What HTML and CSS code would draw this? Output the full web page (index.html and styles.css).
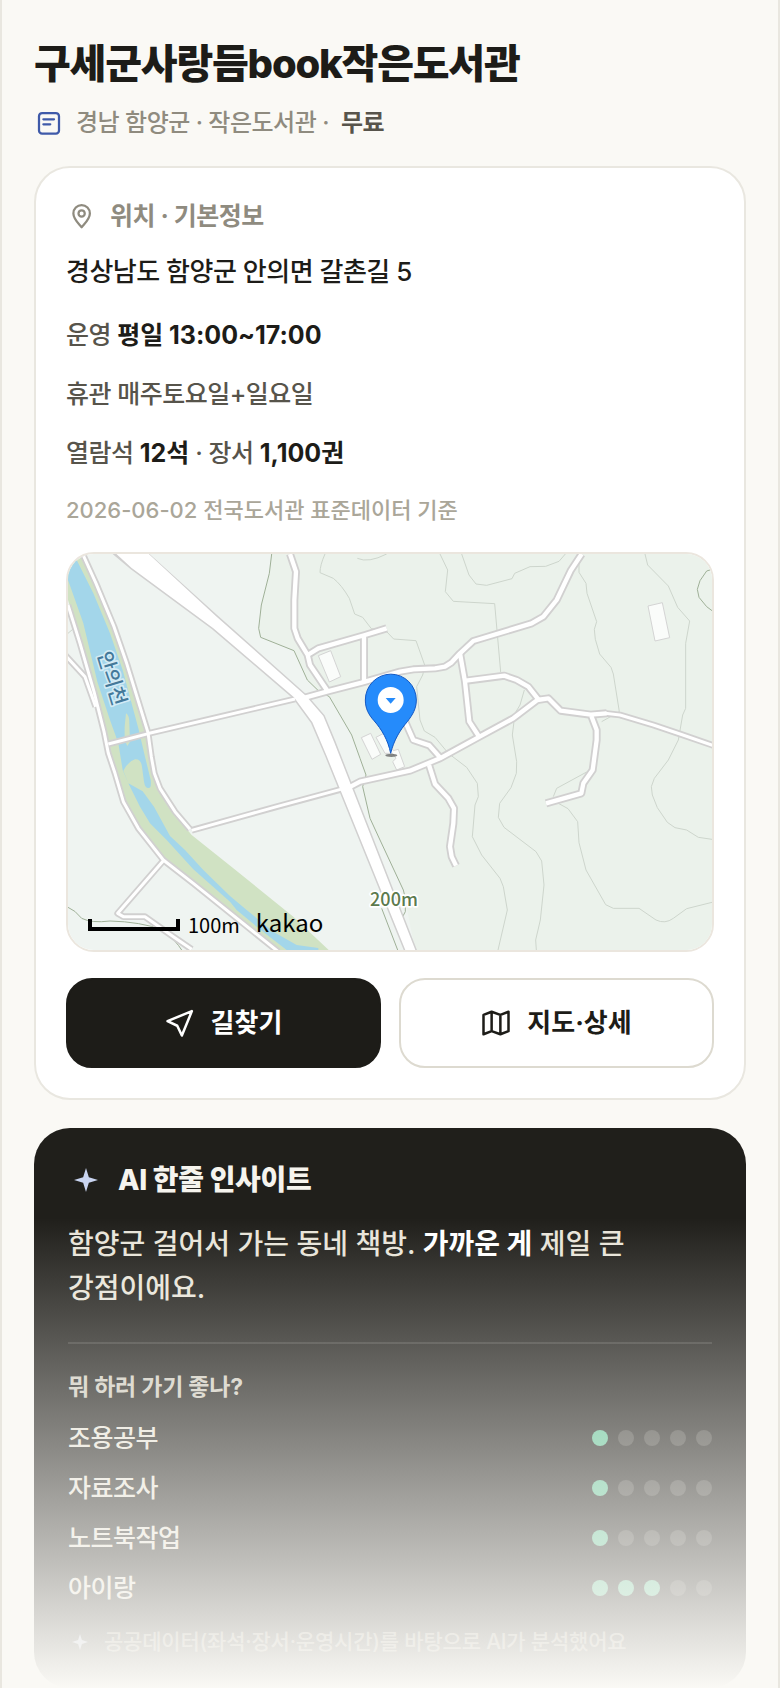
FILE: index.html
```html
<!DOCTYPE html>
<html lang="ko">
<head>
    <meta charset="UTF-8">
    <meta name="viewport" content="width=device-width, initial-scale=1.0">
    <title>구세군사랑듬book작은도서관</title>
    <link rel="stylesheet" href="styles.css">
</head>
<body>
    <main class="sheet">
        <header class="head">
            <h1>구세군사랑듬book작은도서관</h1>
            <p class="meta">
                <svg class="icon icon-type" viewBox="0 0 24 24" aria-hidden="true">
                    <rect x="4" y="4" width="16" height="16.500" rx="2.500"/>
                    <path d="M7.500 9h8.500M7.500 13h5.500"/>
                </svg>
                <span>경남 함양군 · 작은도서관 ·</span>
                <b>무료</b>
            </p>
        </header>

        <section class="card">
            <h2 class="card-title">
                <svg class="icon" viewBox="0 0 24 24" aria-hidden="true">
                    <path d="M12.500 21C9.700 17.600 5.900 14.200 5.900 9.900a6.600 6.600 0 0 1 13.200 0c0 4.300-3.800 7.700-6.600 11.100z"/>
                    <circle cx="12.500" cy="9.900" r="2.500"/>
                </svg>
                위치 · 기본정보
            </h2>
            <p class="address">경상남도 함양군 안의면 갈촌길 5</p>
            <p class="row">운영 <b>평일 13:00~17:00</b></p>
            <p class="row">휴관 매주토요일+일요일</p>
            <p class="row">열람석 <b>12석</b> · 장서 <b>1,100권</b></p>
            <p class="source">2026-06-02 전국도서관 표준데이터 기준</p>

            <div class="map">
                <svg class="map-tiles" viewBox="24 42 1932 1188" preserveAspectRatio="xMidYMid slice" role="img" aria-label="지도">
                    <!-- land -->
                    <rect class="land" x="24" y="42" width="1932" height="1188"/>
                    <path class="hill" d="M635 42L628 100 604 195 596 265 602 292 702 332 742 420 775 452 808 470 875 585 900 655 918 705 908 740 930 835 960 900 1030 1050 1065 1230H1956V42Z"/>

                    <!-- river -->
                    <path class="bank" d="M24 42H58L100 130 155 250 195 360 250 560 272 650 290 740 325 800 395 885 520 985 700 1130 806 1230H640L400 1030 310 955 235 865 190 785 165 700 140 600 100 440 60 300 24 180Z"/>
                    <path class="water" d="M24 42L50 60 100 160 150 280 188 390 235 565 255 650 272 720Q275 745 265 744 255 744 252 725L246 680Q243 656 225 658 205 664 190 692L205 730 248 754 282 800 330 888 375 930 430 990 510 1068 560 1110 640 1175 710 1215 775 1224V1230H680L590 1160 530 1110 510 1085 400 988 320 900 270 850 240 800 205 730 188 690 175 610 150 540 112 425 70 250 24 120Z"/>
                    <path class="bank" d="M198 520Q208 525 208 550L210 605 202 618 194 600Q192 560 198 520Z"/>

                    <!-- contour lines -->
                    <g class="contour">
                        <path d="M795 42Q780 75 780 98L820 115Q845 135 868 175L884 222 908 232 934 266 980 275 1001 297 1068 302 1095 378 1088 405 1070 440 1080 540 1093 573 1125 592 1165 640 1220 682 1252 730 1255 770 1245 795 1237 890 1265 945 1320 1015 1330 1040 1342 1110 1314 1230"/>
                        <path d="M892 55Q925 70 980 42"/>
                        <path d="M1140 42L1163 90 1156 155 1180 184 1304 191 1322 396"/>
                        <path d="M1205 42L1227 105 1248 132 1280 136 1356 116 1364 100 1410 80 1457 79 1497 64 1516 42"/>
                        <path d="M1393 450L1380 495 1365 520 1357 585 1370 665 1369 700 1353 743 1319 790 1315 832 1332 862 1428 935 1445 963 1452 1035 1441 1140 1427 1200 1429 1230"/>
                        <path d="M1557 42V97L1578 130 1581 160 1610 245 1603 268 1606 298 1619 342 1653 382 1660 402 1678 515 1625 545"/>
                        <path d="M1755 42L1763 75 1825 138 1853 202 1889 243 1877 310V505L1868 525 1855 600 1825 660 1783 715 1774 740 1777 765 1792 803 1822 847 1845 863 1880 870 1915 892 1956 898"/>
                        <path d="M1580 696L1490 745 1480 770M1495 790L1524 806 1553 845 1557 908 1578 990 1637 1094 1660 1105H1737L1788 1140Q1815 1153 1840 1135L1880 1106 1956 1087"/>
                        <path d="M24 280L45 262 30 215"/>
                    </g>
                    <g class="boundary">
                        <path d="M635 42L628 100 604 195 596 265 602 292 702 332 742 420 775 452 808 470 875 585 900 655 918 705 908 740 930 835 960 900 1030 1050 1036 1075V1115L1028 1130"/>
                        <path d="M965 1105L1013 1230M24 1102Q45 1110 65 1135 95 1150 150 1143 240 1145 310 1170 350 1205 365 1230"/>
                        <path d="M1956 88L1940 93 1920 122 1912 148 1917 172 1940 200 1956 212"/>
                    </g>

                    <!-- buildings -->
                    <g class="building">
                        <path d="M775 347L812 332 842 410 808 426Z"/>
                        <path d="M904 593L932 580 962 643 936 658Z"/>
                        <path d="M948 592L975 578 1000 632 1015 628 1034 680 1010 690 998 665 1008 655 998 640 975 640Z"/>
                        <path d="M1764 198L1807 188 1829 293 1785 303Z"/>
                    </g>

                    <!-- roads: grey casing first, white surface on top -->
                    <defs>
                        <g id="lanes">
                            <path d="M24 195L60 310 102 455 132 575 145 640 165 700 190 785 235 865 310 960 400 1030 655 1235"/>
                            <path d="M15 345L75 410 107 500"/>
                            <path d="M68 42L108 130 162 260 200 370 264 578 274 650 283 700 300 745 345 815 390 868"/>
                            <path d="M310 962L173 1120 190 1130H255L340 1190 395 1228"/>
                            <path d="M145 612L268 580 705 477"/>
                            <path d="M395 871L650 800 850 746"/>
                        </g>
                        <g id="streets">
                            <path d="M735 473L800 455 905 428 1020 395 1060 388 1125 385 1155 380 1175 367 1200 340 1240 303 1415 250 1450 230 1490 180 1532 92 1565 42"/>
                            <path d="M690 42L708 95 703 180V265L713 295 743 345 750 375 802 452"/>
                            <path d="M743 345L775 325 915 285 980 265M912 287V425"/>
                            <path d="M1200 340L1215 425 1228 545 1256 588"/>
                            <path d="M1218 422L1333 407 1370 420 1405 440 1435 478"/>
                            <path d="M862 745L900 725 1050 692 1140 655 1255 592 1360 535 1432 480 1465 475 1502 512 1592 524 1640 520"/>
                            <path d="M1020 500L1040 555 1060 600 1108 616 1140 652"/>
                            <path d="M1107 675L1125 732 1165 775 1182 805 1180 850 1170 920 1175 950 1188 977"/>
                            <path d="M1594 528L1610 570V600L1598 690 1570 730 1564 760 1458 790"/>
                        </g>
                        <path id="lane-east" d="M1635 520L1680 525 1780 555 1860 582 1970 620"/>
                    </defs>
                    <use class="lane-case" href="#lanes"/>
                    <use class="lane-case" href="#lane-east"/>
                    <use class="street-case" href="#streets"/>
                    <path class="highway-case" d="M165 42L215 84 460 265 702 472 757 547 800 648 1038 1235H1068L822 605 790 528 738 468 470 230 262 42Z"/>
                    <use class="lane" href="#lanes"/>
                    <use class="lane" href="#lane-east"/>
                    <use class="street" href="#streets"/>
                    <path class="highway" d="M165 38L215 84 460 265 702 472 757 547 800 648 1038 1235H1068L822 605 790 528 738 468 470 230 262 38Z"/>

                    <text class="river-name" x="0" y="0" transform="translate(136 421) rotate(73)">안의천</text>
                    <text class="contour-label" x="1002" y="1098">200m</text>

                    <!-- pin -->
                    <ellipse class="pin-shadow" cx="994" cy="646" rx="18" ry="5"/>
                    <path class="pin" d="M992 640C984 600 965 568 942 542 926 524 916 506 916 480A76 77 0 0 1 1069 480C1069 506 1058 524 1042 545 1020 570 1001 602 992 640Z"/>
                    <circle class="pin-hole" cx="992" cy="480" r="39"/>
                    <path class="pin-mark" d="M977 474H1007L992 491Z"/>
                </svg>
                <div class="map-legend">
                    <span class="scale-bar"></span>
                    <span class="scale-text">100m</span>
                    <span class="map-brand">kakao</span>
                </div>
            </div>

            <div class="actions">
                <button class="btn btn-dark" type="button">
                    <svg class="icon" viewBox="0 0 24 24" aria-hidden="true">
                        <path d="M21.500 2.500L2 10.500 9.800 14.200 13.500 22Z"/>
                    </svg>
                    길찾기
                </button>
                <button class="btn btn-line" type="button">
                    <svg class="icon" viewBox="0 0 24 24" aria-hidden="true">
                        <path d="M2 5.500L8.500 3 15.500 5.500 22 3V18.500L15.500 21 8.500 18.500 2 21ZM8.500 3V18.500M15.500 5.500V21"/>
                    </svg>
                    지도·상세
                </button>
            </div>
        </section>

        <section class="insight">
            <h2 class="insight-title">
                <svg class="star" viewBox="0 0 24 24" aria-hidden="true">
                    <path d="M12 4L13.900 10.100 20 12 13.900 13.900 12 20 10.100 13.900 4 12 10.100 10.100Z"/>
                </svg>
                AI 한줄 인사이트
            </h2>
            <p class="summary">함양군 걸어서 가는 동네 책방. <b>가까운 게</b> 제일 큰 강점이에요.</p>
            <div class="fit">
                <h3>뭐 하러 가기 좋나?</h3>
                <ul>
                    <li>조용공부 <span class="dots"><i class="on"></i><i></i><i></i><i></i><i></i></span></li>
                    <li>자료조사 <span class="dots"><i class="on"></i><i></i><i></i><i></i><i></i></span></li>
                    <li>노트북작업 <span class="dots"><i class="on"></i><i></i><i></i><i></i><i></i></span></li>
                    <li>아이랑 <span class="dots"><i class="on"></i><i class="on"></i><i class="on"></i><i></i><i></i></span></li>
                </ul>
            </div>
            <p class="note">
                <svg class="star" viewBox="0 0 24 24" aria-hidden="true">
                    <path d="M12 4L13.900 10.100 20 12 13.900 13.900 12 20 10.100 13.900 4 12 10.100 10.100Z"/>
                </svg>
                공공데이터(좌석·장서·운영시간)를 바탕으로 AI가 분석했어요
            </p>
        </section>

        <div class="fade"></div>
    </main>
</body>
</html>
```
FILE: styles.css
```css
* {
    margin: 0;
    padding: 0;
    box-sizing: border-box;
}

body {
    background-color: #faf9f5;
    color: #1d1c18;
    font-family: Inter, "Noto Sans CJK KR", sans-serif;
    font-size: 25px;
    line-height: 36px;
    font-weight: 500;
    letter-spacing: -0.02em;
    word-break: keep-all;
}

h1, h2, h3 {
    font-weight: 700;
}

.sheet {
    position: relative;
    overflow: hidden;
    padding: 34px 32px 0;
    border-left: 2px solid #e9e7e0;
    border-right: 2px solid #e9e7e0;
}

.icon {
    flex: none;
    width: 30px;
    height: 30px;
    fill: none;
    stroke: currentColor;
    stroke-width: 1.8;
    stroke-linecap: round;
    stroke-linejoin: round;
}

/* header */
.head {
    display: flex;
    flex-direction: column;
    gap: 9px;
    margin-bottom: 23px;
}

h1 {
    font-size: 40px;
    line-height: 60px;
    font-weight: 800;
    letter-spacing: -0.03em;
}

.meta {
    display: flex;
    align-items: center;
    gap: 12px;
    height: 40px;
    font-size: 24px;
    color: #8f8b7f;
}

.meta b {
    color: #57544b;
}

.icon-type {
    color: #3f5aa9;
}

/* info card */
.card {
    padding: 30px;
    border: 2px solid #e9e7e0;
    border-radius: 36px;
    background-color: #ffffff;
}

.card-title {
    display: flex;
    align-items: center;
    gap: 14px;
    margin-bottom: 18px;
    font-size: 25px;
    color: #8f8b7f;
}

.address {
    margin-bottom: 23px;
    font-size: 26px;
    line-height: 40px;
}

.row {
    margin-bottom: 19px;
    line-height: 40px;
    color: #57544b;
}

.row b {
    letter-spacing: normal;
    color: #1d1c18;
}

.source {
    margin-bottom: 24px;
    font-size: 22px;
    letter-spacing: normal;
    color: #aaa699;
}

/* map */
.map {
    position: relative;
    height: 400px;
    overflow: hidden;
    border: 2px solid #ebe6de;
    border-radius: 28px;
    letter-spacing: normal;
}

.map-tiles {
    display: block;
    width: 100%;
    height: 100%;
}

.land { fill: #eff4f1; }
.hill { fill: #ebf2eb; }
.bank { fill: #d0e2c3; }
.water { fill: #a3d6ea; }

.contour, .boundary {
    fill: none;
    stroke: #cdd5cc;
    stroke-width: 3;
}

.boundary {
    stroke: #9fb097;
}

.building {
    fill: #fafcfa;
    stroke: #d4d4d4;
    stroke-width: 3;
}

.lane, .lane-case, .street, .street-case {
    fill: none;
    stroke-linejoin: round;
}

.lane-case { stroke: #d1d0d0; stroke-width: 20; }
.lane { stroke: #ffffff; stroke-width: 9; }
.street-case { stroke: #d1d0d0; stroke-width: 24; }
.street { stroke: #ffffff; stroke-width: 13; }
.highway-case { fill: #d1d0d0; stroke: #d1d0d0; stroke-width: 9; }
.highway { fill: #ffffff; }

.river-name, .contour-label {
    font-family: "Noto Sans CJK KR", sans-serif;
    font-size: 54px;
    font-weight: 500;
    text-anchor: middle;
    paint-order: stroke;
    stroke-linejoin: round;
    stroke-width: 10;
}

.river-name {
    font-size: 60px;
    fill: #44799a;
    stroke: #d3ebf5;
}

.contour-label {
    fill: #5c7a4e;
    stroke: #ffffff;
}

.pin {
    fill: #258bfb;
    stroke: #1359c4;
    stroke-width: 3;
}

.pin-hole { fill: #ffffff; }
.pin-mark { fill: #258bfb; }
.pin-shadow { fill: #555555; opacity: 0.7; }

.map-legend {
    position: absolute;
    left: 20px;
    bottom: 10px;
    display: flex;
    align-items: center;
    gap: 8px;
    line-height: 30px;
    color: #000000;
}

.scale-bar {
    width: 92px;
    height: 12px;
    border: solid #000000;
    border-width: 0 4px 4px;
}

.scale-text {
    font-family: "Noto Sans CJK KR", sans-serif;
    font-size: 20px;
    font-weight: 400;
}

.map-brand {
    align-self: flex-start;
    margin-left: 8px;
    font-family: "Noto Sans CJK KR", sans-serif;
    font-size: 24px;
    font-weight: 400;
    line-height: 24px;
}

/* buttons */
.actions {
    display: flex;
    gap: 18px;
    margin-top: 26px;
}

.btn {
    flex: 1;
    display: flex;
    align-items: center;
    justify-content: center;
    gap: 16px;
    height: 90px;
    border: 2px solid #1d1c18;
    border-radius: 26px;
    background-color: #ffffff;
    color: #1d1c18;
    font: inherit;
    font-size: 26px;
    font-weight: 700;
}

.btn .icon {
    stroke-width: 2;
}

.btn-dark {
    background-color: #1d1c18;
    color: #ffffff;
}

.btn-line {
    border-color: #dddad0;
}

/* insight card */
.insight {
    margin-top: 28px;
    padding: 34px 34px 28px;
    border-radius: 36px;
    background-color: #201f1b;
    color: #e8e4d9;
}

.insight-title {
    display: flex;
    align-items: center;
    gap: 14px;
    margin-bottom: 24px;
    font-size: 28px;
    font-weight: 800;
    letter-spacing: -0.01em;
    color: #f6f4ee;
}

.star {
    flex: none;
    width: 36px;
    height: 36px;
    fill: #c9d4f0;
}

.summary {
    font-size: 28px;
    line-height: 44px;
    letter-spacing: normal;
}

.summary b {
    color: #ffffff;
}

.fit {
    margin-top: 32px;
    padding-top: 25px;
    border-top: 2px solid #3a3935;
}

.fit h3 {
    margin-bottom: 8px;
    font-size: 23px;
    letter-spacing: -0.01em;
    color: #cfcbbf;
}

.fit ul {
    list-style: none;
}

.fit li {
    display: flex;
    align-items: center;
    justify-content: space-between;
    height: 50px;
}

.dots {
    display: flex;
    gap: 10px;
}

.dots i {
    width: 16px;
    height: 16px;
    border-radius: 50%;
    background-color: #45443f;
}

.dots .on {
    background-color: #62c397;
}

.note {
    display: flex;
    align-items: center;
    gap: 12px;
    margin-top: 11px;
    font-size: 21px;
    letter-spacing: -0.01em;
    color: #8f8b7f;
}

.note .star {
    width: 24px;
    height: 24px;
    fill: #a9b4d4;
}

/* preview fades out towards the bottom */
.fade {
    position: absolute;
    left: -2px;
    right: -2px;
    bottom: 0;
    height: 470px;
    background: linear-gradient(rgba(250, 249, 245, 0), #faf9f5);
    pointer-events: none;
}
```
